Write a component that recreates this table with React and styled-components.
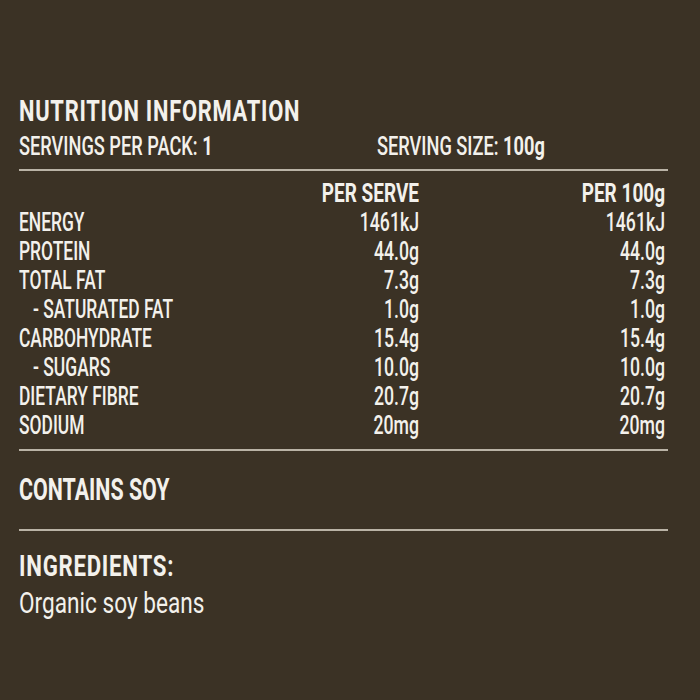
import React from "react";
import styled, { createGlobalStyle } from "styled-components";

const GlobalStyle = createGlobalStyle`
  html, body {
    margin: 0;
    background: #3b3225;
  }
  body {
    font-family: Roboto, "Liberation Sans", sans-serif;
    color: #f3f1ec;
  }
`;

const rows = [
  { label: "ENERGY", serve: "1461kJ", per100: "1461kJ" },
  { label: "PROTEIN", serve: "44.0g", per100: "44.0g" },
  { label: "TOTAL FAT", serve: "7.3g", per100: "7.3g" },
  { label: "- SATURATED FAT", serve: "1.0g", per100: "1.0g", sub: true },
  { label: "CARBOHYDRATE", serve: "15.4g", per100: "15.4g" },
  { label: "- SUGARS", serve: "10.0g", per100: "10.0g", sub: true },
  { label: "DIETARY FIBRE", serve: "20.7g", per100: "20.7g" },
  { label: "SODIUM", serve: "20mg", per100: "20mg" },
];

const Page = styled.main`
  width: 700px;
  height: 700px;
  box-sizing: border-box;
  padding: 96px 32px 0 19px;
  background: #3b3225;
  overflow: hidden;
`;

const Title = styled.h1`
  margin: 0;
  font-size: 30px;
  line-height: 30px;
  font-weight: 700;
  letter-spacing: 1px;
  white-space: nowrap;
  transform: scaleX(0.73);
  transform-origin: left center;
`;

const ServingRow = styled.div`
  display: grid;
  grid-template-columns: 358px 1fr;
  margin-top: 7px;
  font-size: 26px;
  line-height: 26px;
  font-weight: 500;

  b {
    font-weight: 700;
  }
`;

const ServingItem = styled.span`
  display: block;
  white-space: nowrap;
  transform: scaleX(0.7);
  transform-origin: left center;
`;

const Rule = styled.hr`
  margin: ${(p) => p.$gap}px 0 0;
  border: none;
  height: 2px;
  background: #bab3a6;
`;

const Table = styled.div`
  display: grid;
  grid-template-columns: 220px 180px 246px;
  margin-top: 8px;
  font-size: 26px;
  line-height: 29px;
  font-weight: 500;
`;

const Label = styled.div`
  white-space: nowrap;
  padding-left: ${(p) => (p.$sub ? 21 : 0)}px;
  transform: scaleX(0.67);
  transform-origin: left center;
`;

const Value = styled.div`
  white-space: nowrap;
  text-align: right;
  font-weight: ${(p) => (p.$head ? 700 : 500)};
  transform: scaleX(${(p) => (p.$head ? 0.73 : 0.68)});
  transform-origin: right center;
`;

const Contains = styled.h2`
  margin: 23px 0 0;
  font-size: 31px;
  line-height: 31px;
  font-weight: 700;
  white-space: nowrap;
  transform: scaleX(0.69);
  transform-origin: left center;
`;

const Heading = styled.h3`
  margin: 20px 0 0;
  font-size: 30px;
  line-height: 30px;
  font-weight: 700;
  letter-spacing: 1px;
  white-space: nowrap;
  transform: scaleX(0.74);
  transform-origin: left center;
`;

const Ingredients = styled.p`
  margin: 8px 0 0;
  font-size: 29px;
  line-height: 29px;
  font-weight: 400;
  white-space: nowrap;
  transform: scaleX(0.78);
  transform-origin: left center;
`;

export default function App() {
  return (
    <>
      <GlobalStyle />
      <Page>
        <Title>NUTRITION INFORMATION</Title>
        <ServingRow>
          <ServingItem>
            SERVINGS PER PACK: <b>1</b>
          </ServingItem>
          <ServingItem>
            SERVING SIZE: <b>100g</b>
          </ServingItem>
        </ServingRow>
        <Rule $gap={10} />
        <Table>
          <Label />
          <Value $head>PER SERVE</Value>
          <Value $head>PER 100g</Value>
          {rows.map((r) => (
            <React.Fragment key={r.label}>
              <Label $sub={r.sub}>{r.label}</Label>
              <Value>{r.serve}</Value>
              <Value>{r.per100}</Value>
            </React.Fragment>
          ))}
        </Table>
        <Rule $gap={9} />
        <Contains>CONTAINS SOY</Contains>
        <Rule $gap={24} />
        <Heading>INGREDIENTS:</Heading>
        <Ingredients>Organic soy beans</Ingredients>
      </Page>
    </>
  );
}
